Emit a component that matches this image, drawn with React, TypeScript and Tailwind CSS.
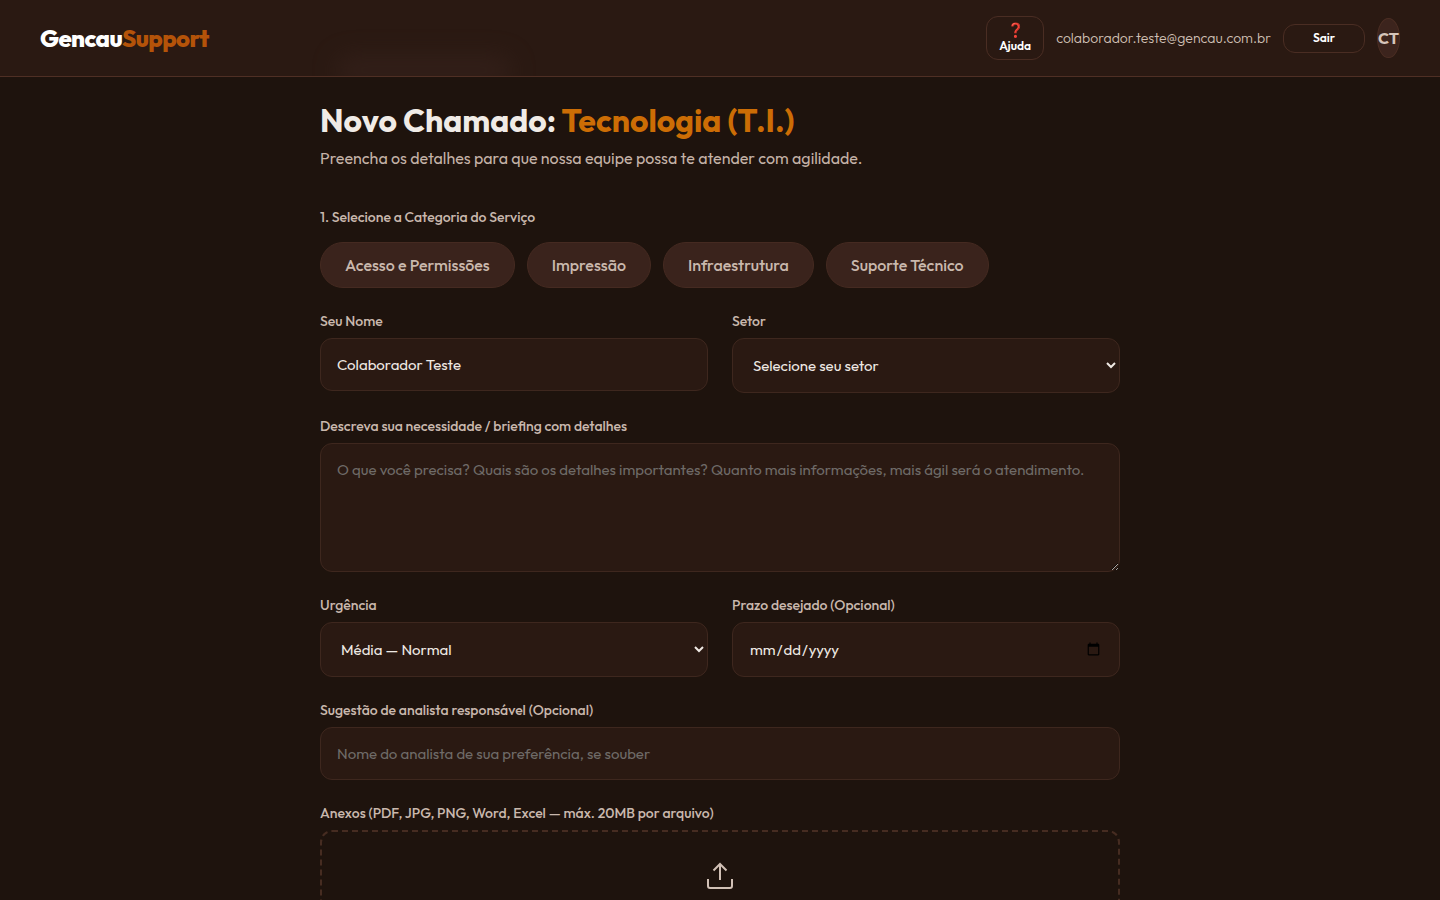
import { useState } from "react";
import type { ReactNode } from "react";

const categories = ["Acesso e Permissões", "Impressão", "Infraestrutura", "Suporte Técnico"];

const fieldClass =
  "block w-full rounded-xl border border-[#3e271e] bg-[#2a1912] text-[15px] leading-[19px] text-[#efe9e4] placeholder:text-[#6f6b68] outline-none focus:border-[#b45309]";

function Field({ id, label, children }: { id: string; label: string; children: ReactNode }) {
  return (
    <div>
      <label htmlFor={id} className="mb-2 block text-sm leading-[18px] font-medium text-[#c9b8ad]">
        {label}
      </label>
      {children}
    </div>
  );
}

function Header() {
  return (
    <header className="sticky top-0 z-10 overflow-hidden border-b border-[#4f2f24] bg-[#2a1912]">
      <div aria-hidden="true" className="absolute -bottom-2 left-84 h-7 w-44 rounded-full bg-[#35211b] opacity-80 blur-md" />
      <div className="relative flex items-center justify-between px-10 py-4">
        <a href="#" className="text-2xl font-extrabold tracking-tight text-white">
          Gencau<span className="text-[#b45309]">Support</span>
        </a>
        <div className="flex items-center gap-3">
          <button
            type="button"
            className="flex h-11 w-[58px] flex-col items-center justify-center rounded-xl border border-[#4a2d23] text-xs leading-[15px] font-semibold text-white"
          >
            <span aria-hidden="true" className="text-sm leading-[15px]">❓</span>
            Ajuda
          </button>
          <span className="text-sm font-light text-[#d1c0b5]">colaborador.teste@gencau.com.br</span>
          <button type="button" className="h-[29px] w-[82px] rounded-xl border border-[#4a2d23] text-xs font-semibold text-white">
            Sair
          </button>
          <div className="flex h-10 w-[23px] items-center justify-center rounded-[50%] border border-[#4a2d23] bg-[#3c241d] text-base font-bold text-[#d6c5ba]">
            CT
          </div>
        </div>
      </div>
    </header>
  );
}

export default function App() {
  const [category, setCategory] = useState("");

  return (
    <div className="min-h-screen bg-[#1e130d] font-['Outfit','Lato',sans-serif]">
      <Header />
      <main className="mx-auto max-w-[800px] pt-[23px] pb-10">
        <h1 className="text-[32px] leading-10 font-bold text-[#f0ebe6]">
          Novo Chamado: <span className="text-[#cc6d05]">Tecnologia (T.I.)</span>
        </h1>
        <p className="mt-2 text-base leading-5 text-[#c4b2a7]">
          Preencha os detalhes para que nossa equipe possa te atender com agilidade.
        </p>

        <form className="mt-10 flex flex-col gap-6">
          <fieldset>
            <legend className="mb-4 text-sm leading-[18px] font-medium text-[#c9b8ad]">
              1. Selecione a Categoria do Serviço
            </legend>
            <div className="flex flex-wrap gap-3">
              {categories.map((name) => (
                <button
                  key={name}
                  type="button"
                  aria-pressed={category === name}
                  onClick={() => setCategory(name)}
                  className="h-[46px] rounded-full border border-[#452a21] bg-[#3a231c] px-6 text-base font-medium text-[#c9b8ad] aria-pressed:border-[#b45309]"
                >
                  {name}
                </button>
              ))}
            </div>
          </fieldset>

          <div className="grid gap-6 md:grid-cols-2">
            <Field id="nome" label="Seu Nome">
              <input id="nome" type="text" defaultValue="Colaborador Teste" className={`${fieldClass} h-[53px] px-4`} />
            </Field>
            <Field id="setor" label="Setor">
              <select id="setor" className={`${fieldClass} h-[55px] px-4`}>
                <option>Selecione seu setor</option>
              </select>
            </Field>
          </div>

          <Field id="descricao" label="Descreva sua necessidade / briefing com detalhes">
            <textarea
              id="descricao"
              placeholder="O que você precisa? Quais são os detalhes importantes? Quanto mais informações, mais ágil será o atendimento."
              className={`${fieldClass} h-[129px] resize-y p-4`}
            />
          </Field>

          <div className="grid gap-6 md:grid-cols-2">
            <Field id="urgencia" label="Urgência">
              <select id="urgencia" className={`${fieldClass} h-[55px] px-4`}>
                <option>Média — Normal</option>
              </select>
            </Field>
            <Field id="prazo" label="Prazo desejado (Opcional)">
              <input id="prazo" type="date" className={`${fieldClass} h-[55px] px-4`} />
            </Field>
          </div>

          <Field id="analista" label="Sugestão de analista responsável (Opcional)">
            <input
              id="analista"
              type="text"
              placeholder="Nome do analista de sua preferência, se souber"
              className={`${fieldClass} h-[53px] px-4`}
            />
          </Field>

          <Field id="anexos" label="Anexos (PDF, JPG, PNG, Word, Excel — máx. 20MB por arquivo)">
            <label
              htmlFor="anexos"
              className="flex h-36 cursor-pointer justify-center rounded-xl border-2 border-dashed border-[#462c21] pt-[27px]"
            >
              <svg
                viewBox="0 0 32 32"
                className="size-8"
                fill="none"
                stroke="#d1c0b5"
                strokeWidth="2"
                aria-hidden="true"
              >
                <path d="M16 21V5M9.500 11.500 16 5l6.500 6.500M4 20v7a2 2 0 0 0 2 2h20a2 2 0 0 0 2-2v-7" />
              </svg>
              <input id="anexos" type="file" multiple className="sr-only" />
            </label>
          </Field>
        </form>
      </main>
    </div>
  );
}
